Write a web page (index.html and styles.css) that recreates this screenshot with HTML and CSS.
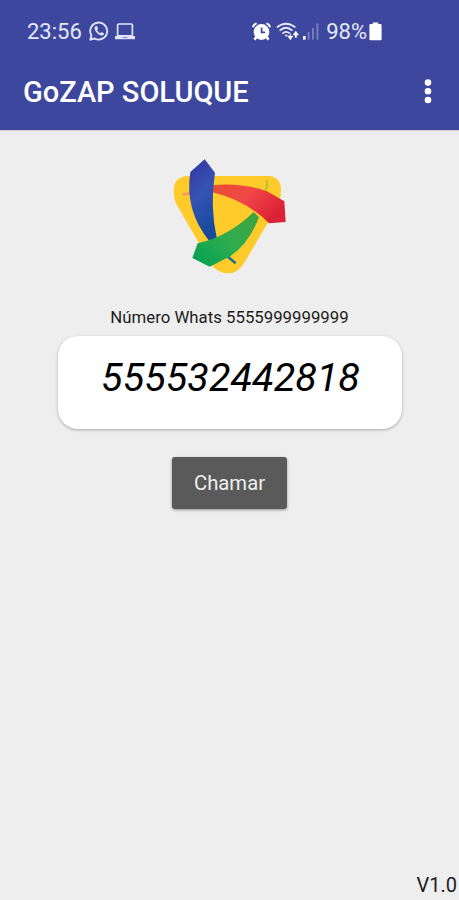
FILE: index.html
```html
<!DOCTYPE html>
<html lang="pt-BR">
<head>
    <meta charset="UTF-8">
    <meta name="viewport" content="width=device-width, initial-scale=1.0">
    <title>GoZAP SOLUQUE</title>
    <link rel="stylesheet" href="styles.css">
</head>
<body>
    <header class="top">
        <div class="status-bar">
            <div class="status-left">
                <span class="time">23:56</span>
                <svg class="icon-whats" width="20" height="20" viewBox="0 0 20 20">
                    <path d="M1.3 18.7 L2.4 14.4 A8.5 8.5 0 1 1 5.6 17.5 Z" fill="none" stroke="#dfe4fb" stroke-width="1.9" stroke-linejoin="round"/>
                    <path d="M7.2 5 C5.8 5.3 5.2 6.8 5.7 8.2 C6.9 11.4 9 13.5 12 14.5 C13.6 14.9 15 14.1 15.1 12.6 L12.6 11.1 L11.3 12.3 C9.9 11.7 8.8 10.5 8.1 9 L9 7.8 L8 5.1 Z" fill="#dfe4fb"/>
                </svg>
                <svg class="icon-laptop" width="20" height="17" viewBox="0 0 20 17">
                    <rect x="2.6" y="1" width="14.8" height="11.8" rx="1" fill="none" stroke="#dfe4fb" stroke-width="1.7"/>
                    <path d="M0 13 H20 V16.2 H0 Z" fill="#dfe4fb"/>
                    <path d="M7.5 14.5 H12.5" stroke="#7f88c6" stroke-width="1"/>
                </svg>
            </div>
            <div class="status-right">
                <svg class="icon-alarm" width="19" height="19" viewBox="0 0 19 19">
                    <path d="M4.5 15 L2.4 17.6 M14.5 15 L16.6 17.6" stroke="#fff" stroke-width="2.6"/>
                    <path d="M1 5.2 Q1.6 2.2 4.6 1.4 M18 5.2 Q17.4 2.2 14.4 1.4" fill="none" stroke="#fff" stroke-width="2"/>
                    <circle cx="9.5" cy="10" r="7.9" fill="#fff"/>
                    <path d="M9.6 5.4 V10.4 H13" fill="none" stroke="#3c479d" stroke-width="1.7"/>
                </svg>
                <svg class="icon-wifi" width="23" height="19" viewBox="0 0 23 19">
                    <g fill="none" stroke="#e6eafc" stroke-width="1.8">
                        <path d="M0.8 5.4 Q10 -2 19.4 5.4"/>
                        <path d="M3.6 8.6 Q10 3 16.4 8.6"/>
                        <path d="M6.4 11.6 Q10 8.2 13.8 11.4"/>
                    </g>
                    <path d="M8.4 12.8 H12 L10.2 15 Z" fill="#e6eafc"/>
                    <path d="M14.4 11.5 V14 H16.8 L14.4 18 L11.6 14 H14 V11.5 Z M19 15.5 V13 H17 L19.8 9 L22.6 13 H20.6 V15.5 Z" fill="#fff" stroke="#fff" stroke-width="0.4"/>
                </svg>
                <svg class="icon-signal" width="16" height="17" viewBox="0 0 16 17">
                    <rect x="0" y="13" width="2.6" height="3.6" fill="#fff"/>
                    <g fill="#737cbd">
                        <rect x="4.6" y="9" width="2" height="7.6"/>
                        <rect x="9" y="5" width="2" height="11.6"/>
                        <rect x="13.4" y="0.5" width="2" height="16.1"/>
                    </g>
                </svg>
                <span class="battery-text">98%</span>
                <svg class="icon-battery" width="13" height="19" viewBox="0 0 13 19">
                    <path d="M3.8 0.4 H9.2 V2 H11.4 Q12.6 2 12.6 3.2 V17 Q12.6 18.2 11.4 18.2 H1.6 Q0.4 18.2 0.4 17 V3.2 Q0.4 2 1.6 2 H3.8 Z" fill="#fff"/>
                </svg>
            </div>
        </div>
        <div class="toolbar">
            <h1>GoZAP SOLUQUE</h1>
            <button class="menu" aria-label="Menu">
                <svg width="8" height="26" viewBox="0 0 8 26">
                    <circle cx="4" cy="3.6" r="3.3" fill="#fff"/>
                    <circle cx="4" cy="12.3" r="3.3" fill="#fff"/>
                    <circle cx="4" cy="21" r="3.3" fill="#fff"/>
                </svg>
            </button>
        </div>
    </header>

    <main class="content">
        <svg class="logo" width="130" height="130" viewBox="0 0 390 390">
            <defs>
                <linearGradient id="blue" x1="0" y1="0" x2="0.3" y2="1">
                    <stop offset="0" stop-color="#3436a0"/>
                    <stop offset="0.5" stop-color="#3553b4"/>
                    <stop offset="1" stop-color="#174a9c"/>
                </linearGradient>
                <linearGradient id="red" x1="0" y1="0" x2="1" y2="0.5">
                    <stop offset="0" stop-color="#e8502f"/>
                    <stop offset="0.5" stop-color="#f04747"/>
                    <stop offset="1" stop-color="#dc2236"/>
                </linearGradient>
                <linearGradient id="green" x1="1" y1="0" x2="0" y2="1">
                    <stop offset="0" stop-color="#3fa43c"/>
                    <stop offset="0.5" stop-color="#2fac50"/>
                    <stop offset="1" stop-color="#00a050"/>
                </linearGradient>
            </defs>
            <path d="M66 78 H310 Q348 80 348 120 Q348 150 336 172 L238 338 Q220 370 188 370 Q160 370 140 345 L36 166 Q26 148 26 122 Q26 82 66 78 Z" fill="#fecb2b"/>
            <path d="M305 90 Q310 108 300 124" fill="none" stroke="#a5c23a" stroke-width="5"/>
            <path d="M52 133 L80 130" stroke="#f79a5a" stroke-width="8"/>
            <path d="M186 318 L212 340" stroke="#1b7790" stroke-width="8"/>
            <path d="M140 106 Q226 96 306 124 L358 154 L362 216 L312 220 Q246 152 140 126 Z" fill="url(#red)"/>
            <path d="M76 66 L119 28 L150 68 Q134 170 156 268 L132 272 Q58 180 76 66 Z" fill="url(#blue)"/>
            <path d="M266 186 L282 202 Q250 286 190 322 L134 350 L82 324 L98 280 Q190 260 266 186 Z" fill="url(#green)"/>
        </svg>
        <label class="hint" for="number">Número Whats 5555999999999</label>
        <div class="card">
            <span class="number" id="number">555532442818</span>
        </div>
        <button class="call">Chamar</button>
    </main>

    <footer class="version">V1.0</footer>
</body>
</html>
```

FILE: styles.css
```css
* {
    box-sizing: border-box;
}
body {
    margin: 0;
    height: 100vh;
    display: flex;
    flex-direction: column;
    background: #eeeeee;
    font-family: Roboto, sans-serif;
    color: #1c1c1c;
}
.top {
    height: 130px;
    background: #3c479d;
    box-shadow: 0 1px 1px rgba(0, 0, 0, 0.12);
}
.status-bar {
    display: flex;
    justify-content: space-between;
    height: 62px;
    padding: 0 77px 0 27px;
    color: #e4e8fb;
    font-size: 22px;
}
.status-left,
.status-right {
    display: flex;
    align-items: center;
}
.icon-whats {
    margin-left: 7px;
}
.icon-laptop {
    margin-left: 6px;
}
.icon-wifi {
    margin-left: 5px;
}
.icon-signal {
    margin-left: 4px;
}
.battery-text {
    margin-left: 7px;
}
.icon-battery {
    margin-left: 2px;
}
.toolbar {
    display: flex;
    align-items: center;
    justify-content: space-between;
    height: 59px;
    padding: 0 27px 0 23px;
}
h1 {
    margin: 0;
    font-size: 29px;
    font-weight: 500;
    color: #fff;
}
.menu {
    display: flex;
    padding: 0;
    border: none;
    background: none;
    cursor: pointer;
}
.content {
    flex: 1;
    display: flex;
    flex-direction: column;
    align-items: center;
    padding-top: 20px;
}
.logo {
    display: block;
}
.hint {
    margin-top: 26px;
    font-size: 16.8px;
    line-height: 22px;
}
.card {
    display: flex;
    justify-content: center;
    width: 344px;
    height: 93px;
    margin-top: 8px;
    padding-top: 18px;
    background: #fff;
    border-radius: 20px;
    box-shadow: 0 1px 3px rgba(0, 0, 0, 0.3);
}
.number {
    padding-left: 2px;
    font-size: 39.6px;
    font-style: italic;
    line-height: 48px;
    color: #000;
}
.call {
    width: 115px;
    height: 52px;
    margin-top: 28px;
    padding: 0;
    border: none;
    border-radius: 3px;
    background: #5a5a5a;
    box-shadow: 0 1px 3px rgba(0, 0, 0, 0.4);
    color: #eee;
    font-family: inherit;
    font-size: 20.3px;
    cursor: pointer;
}
.version {
    padding: 0 2px 3px 0;
    text-align: right;
    font-size: 20px;
    line-height: 24px;
}
```
